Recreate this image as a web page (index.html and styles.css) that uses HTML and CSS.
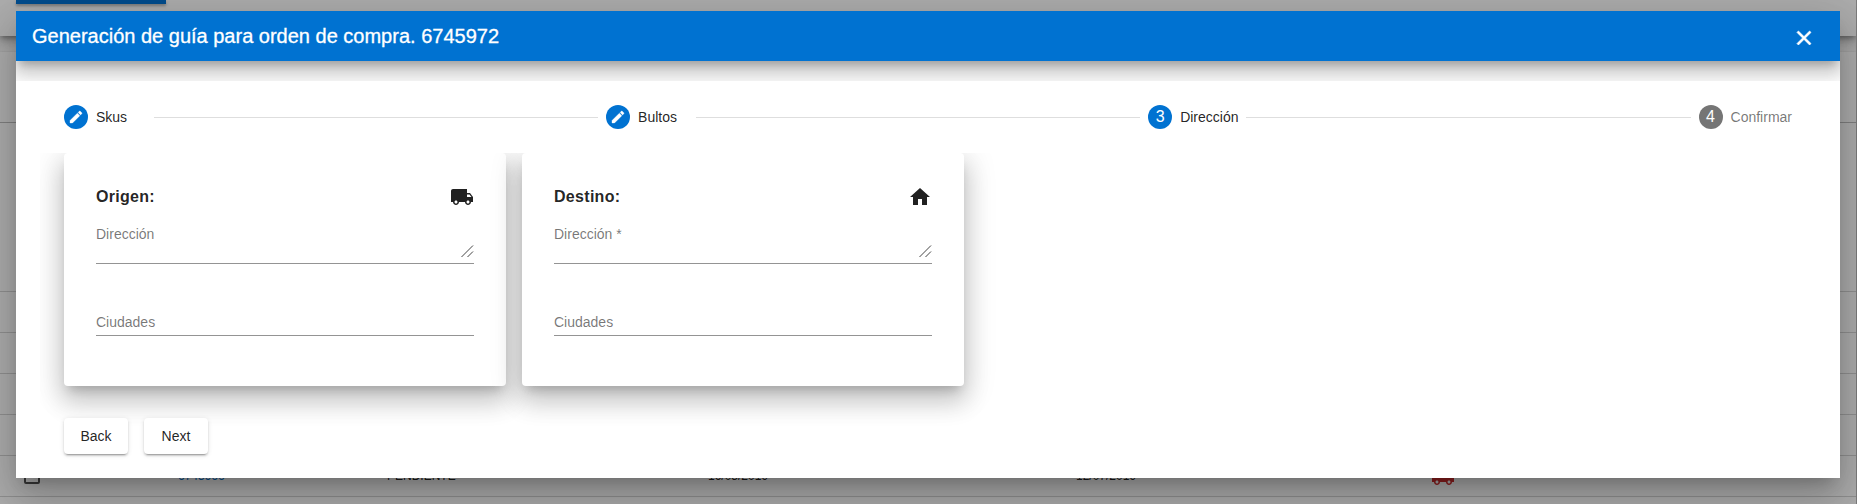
FILE: index.html
```html
<!DOCTYPE html>
<html lang="es">
<head>
<meta charset="utf-8">
<title>Generación de guía</title>
<link rel="stylesheet" href="styles.css">
</head>
<body>
<div class="page">
  <div class="toolbar-card"><div class="toolbar-button"></div></div>
  <div class="table">
    <div class="row row-head"></div>
    <div class="row row-filter"></div>
    <div class="row"></div>
    <div class="row"></div>
    <div class="row"></div>
    <div class="row"></div>
    <div class="row row-data">
      <span class="checkbox"></span>
      <a class="order">6745966</a>
      <span>PENDIENTE</span>
      <span>16/05/2019</span>
      <span>12/07/2019</span>
      <svg class="icon icon-red" viewBox="0 0 24 24"><path d="M20 8h-3V4H3c-1.100 0-2 .9-2 2v11h2c0 1.660 1.340 3 3 3s3-1.340 3-3h6c0 1.660 1.340 3 3 3s3-1.340 3-3h2v-5l-3-4zM6 18.500c-.83 0-1.500-.67-1.500-1.500s.67-1.500 1.500-1.500 1.500.67 1.500 1.500-.67 1.500-1.500 1.500zm13.500-9l1.960 2.500H17V9.500h2.500zm-1.500 9c-.83 0-1.500-.67-1.500-1.500s.67-1.500 1.500-1.500 1.500.67 1.500 1.500-.67 1.500-1.500 1.500z"/></svg>
    </div>
    <div class="row"></div>
  </div>
</div>
<div class="overlay">
  <div class="dialog">
    <div class="dialog-top">
      <header class="dialog-header">
        <h1 class="title">Generación de guía para orden de compra. 6745972</h1>
        <svg class="icon close" viewBox="0 0 24 24"><path d="M19 6.410L17.590 5 12 10.590 6.410 5 5 6.410 10.590 12 5 17.590 6.410 19 12 13.410 17.590 19 19 17.590 13.410 12z"/></svg>
      </header>
    </div>
    <div class="stepper">
      <div class="step"><span class="badge"><svg viewBox="0 0 24 24"><path d="M3 17.250V21h3.750L17.810 9.940l-3.750-3.750L3 17.250zM20.710 7.040c.39-.39.39-1.020 0-1.410l-2.340-2.340c-.39-.39-1.020-.39-1.410 0l-1.830 1.830 3.750 3.750 1.830-1.830z"/></svg></span><span class="step-label">Skus</span></div>
      <div class="line"></div>
      <div class="step"><span class="badge"><svg viewBox="0 0 24 24"><path d="M3 17.250V21h3.750L17.810 9.940l-3.750-3.750L3 17.250zM20.710 7.040c.39-.39.39-1.020 0-1.410l-2.340-2.340c-.39-.39-1.020-.39-1.410 0l-1.830 1.830 3.750 3.750 1.830-1.830z"/></svg></span><span class="step-label">Bultos</span></div>
      <div class="line"></div>
      <div class="step"><span class="badge">3</span><span class="step-label">Dirección</span></div>
      <div class="line"></div>
      <div class="step step-pending"><span class="badge">4</span><span class="step-label">Confirmar</span></div>
    </div>
    <div class="content">
      <div class="cards">
        <section class="card">
          <div class="card-head"><h2>Origen:</h2><svg class="icon" viewBox="0 0 24 24"><path d="M20 8h-3V4H3c-1.100 0-2 .9-2 2v11h2c0 1.660 1.340 3 3 3s3-1.340 3-3h6c0 1.660 1.340 3 3 3s3-1.340 3-3h2v-5l-3-4zM6 18.500c-.83 0-1.500-.67-1.500-1.500s.67-1.500 1.500-1.500 1.500.67 1.500 1.500-.67 1.500-1.500 1.500zm13.500-9l1.960 2.500H17V9.500h2.500zm-1.500 9c-.83 0-1.500-.67-1.500-1.500s.67-1.500 1.500-1.500 1.500.67 1.500 1.500-.67 1.500-1.500 1.500z"/></svg></div>
          <div class="field field-area"><span>Dirección</span><svg class="grip" viewBox="0 0 13 13"><path d="M.5 12 12 .5M6.500 12 12 6.500"/></svg></div>
          <div class="field"><span>Ciudades</span></div>
        </section>
        <section class="card">
          <div class="card-head"><h2>Destino:</h2><svg class="icon" viewBox="0 0 24 24"><path d="M10 20v-6h4v6h5v-8h3L12 3 2 12h3v8z"/></svg></div>
          <div class="field field-area"><span>Dirección *</span><svg class="grip" viewBox="0 0 13 13"><path d="M.5 12 12 .5M6.500 12 12 6.500"/></svg></div>
          <div class="field"><span>Ciudades</span></div>
        </section>
      </div>
      <div class="actions"><button class="button">Back</button><button class="button">Next</button></div>
    </div>
  </div>
</div>
</body>
</html>
```
FILE: styles.css
```css
* { box-sizing: border-box; }
body {
  margin: 0;
  height: 504px;
  overflow: hidden;
  background: #fafafa;
  color: rgba(0, 0, 0, .87);
  font-family: "Liberation Sans", Arial, sans-serif;
  font-size: 14px;
}
h1, h2 { margin: 0; }
.icon { display: block; width: 24px; height: 24px; fill: currentColor; }

/* Page behind the dialog */
.page {
  height: 504px;
  overflow: hidden;
  border-right: 1px solid #b8b8b8;
}
.toolbar-card {
  height: 36px;
  margin-bottom: 16px;
  padding-left: 16px;
  background: #fff;
  box-shadow: 0 3px 5px -1px rgba(0, 0, 0, .3), 0 6px 10px rgba(0, 0, 0, .16), 0 1px 18px rgba(0, 0, 0, .14);
}
.toolbar-button {
  width: 150px;
  height: 4px;
  background: #0072d1;
  box-shadow: 0 3px 1px -2px rgba(0, 0, 0, .3), 0 2px 3px rgba(0, 0, 0, .3);
}
.table { background: #fff; box-shadow: 0 0 2px rgba(0, 0, 0, .14); }
.row { height: 41px; border-bottom: 1px solid #d4d4d4; }
.row-head { height: 71px; border-color: #bdbdbd; }
.row-filter { height: 169px; }
.row-data {
  display: grid;
  grid-template-columns: 154px 209px 321px 368px 355px 24px;
  align-items: center;
  padding-left: 24px;
  font-size: 12px;
}
.order { color: #0072d1; }
.checkbox { width: 16px; height: 16px; border: 2px solid #555; border-radius: 2px; }
.icon-red { margin-top: 2px; color: #d32f2f; }

/* Dialog */
.overlay {
  position: absolute;
  inset: 0;
  padding: 11px 17px 26px 16px;
  background: rgba(0, 0, 0, .32);
}
.dialog {
  height: 467px;
  background: #fff;
  box-shadow: 0 11px 15px -7px rgba(0, 0, 0, .2), 0 24px 38px 3px rgba(0, 0, 0, .14), 0 9px 46px 8px rgba(0, 0, 0, .12);
}
.dialog-top { height: 70px; overflow: hidden; }
.dialog-header {
  display: flex;
  align-items: center;
  justify-content: space-between;
  height: 50px;
  padding: 0 24px 0 16px;
  background: #0072d1;
  color: #fff;
  box-shadow: 0 7px 8px -4px rgba(0, 0, 0, .2), 0 12px 17px 2px rgba(0, 0, 0, .14), 0 5px 22px 4px rgba(0, 0, 0, .12);
}
.title { font-size: 20px; font-weight: 400; line-height: 50px; -webkit-text-stroke: .3px #fff; }
.close { margin-top: 4px; stroke: #fff; stroke-width: .7; }

.stepper {
  display: flex;
  align-items: center;
  gap: 8px;
  height: 72px;
  padding: 0 48px;
}
.step { display: flex; align-items: center; gap: 8px; }
.badge {
  display: flex;
  align-items: center;
  justify-content: center;
  width: 24px;
  height: 24px;
  border-radius: 50%;
  background: #0072d1;
  color: #fff;
  font-size: 16px;
}
.badge svg { width: 16px; height: 16px; fill: #fff; stroke: #fff; stroke-width: .5; }
.step-label { min-width: 50px; }
.step-pending .badge { background: #757575; }
.step-pending .step-label { color: rgba(0, 0, 0, .54); }
.line { flex: 1; height: 1px; background: #dedede; }

.content { height: 325px; padding: 0 24px; overflow: hidden; margin-left: 24px; }
.cards { display: flex; gap: 16px; }
.card {
  width: 442px;
  height: 233px;
  padding: 32px;
  border-radius: 4px;
  background: #fff;
  box-shadow: 0 8px 10px -5px rgba(0, 0, 0, .2), 0 16px 24px 2px rgba(0, 0, 0, .14), 0 6px 30px 5px rgba(0, 0, 0, .12);
}
.card-head { display: flex; align-items: center; justify-content: space-between; height: 24px; }
.card-head h2 { font-size: 16px; font-weight: 700; letter-spacing: .3px; }
.field {
  display: flex;
  align-items: flex-end;
  height: 72px;
  padding-bottom: 5px;
  border-bottom: 1px solid #949494;
  color: rgba(0, 0, 0, .54);
}
.field-area { justify-content: space-between; height: 55px; }
.field-area span { padding-bottom: 16px; }
.grip { width: 13px; height: 13px; fill: none; stroke: #444; stroke-width: 1; }

.actions { display: flex; gap: 16px; margin-top: 32px; }
.button {
  width: 64px;
  height: 36px;
  padding: 0;
  border: 0;
  border-radius: 4px;
  background: #fff;
  color: rgba(0, 0, 0, .87);
  font: 14px "Liberation Sans", Arial, sans-serif;
  box-shadow: 0 3px 1px -2px rgba(0, 0, 0, .2), 0 2px 2px rgba(0, 0, 0, .14), 0 1px 5px rgba(0, 0, 0, .12);
}
```
